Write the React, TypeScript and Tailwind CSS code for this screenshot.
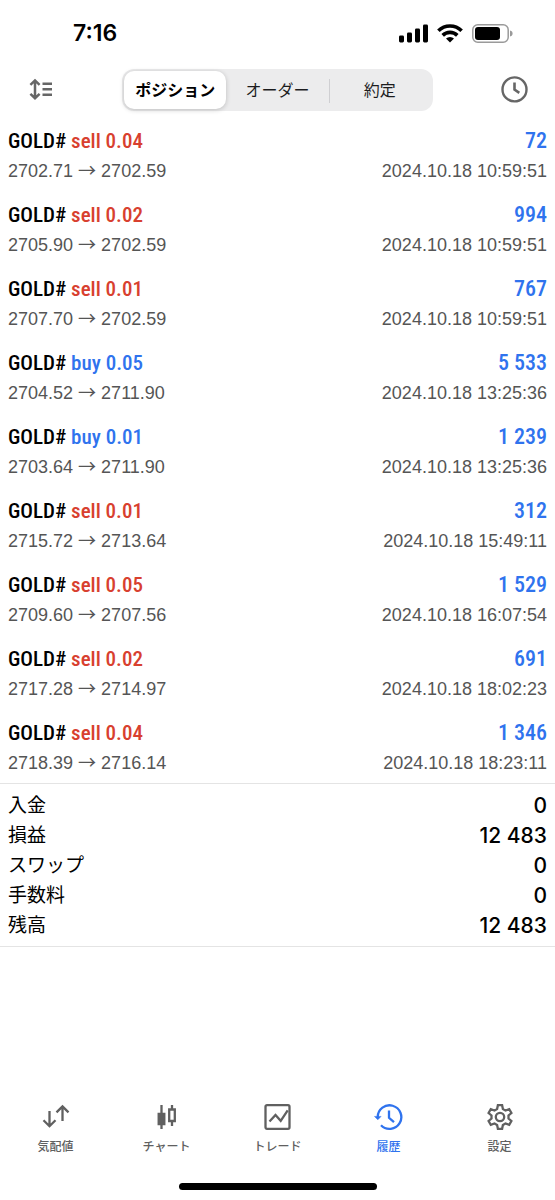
import { useState } from "react";
import type { ReactNode } from "react";
import clsx from "clsx";

type Deal = {
  side: "sell" | "buy";
  volume: string;
  open: string;
  close: string;
  profit: string;
  time: string;
};

const deals: Deal[] = [
  { side: "sell", volume: "0.04", open: "2702.71", close: "2702.59", profit: "72", time: "2024.10.18 10:59:51" },
  { side: "sell", volume: "0.02", open: "2705.90", close: "2702.59", profit: "994", time: "2024.10.18 10:59:51" },
  { side: "sell", volume: "0.01", open: "2707.70", close: "2702.59", profit: "767", time: "2024.10.18 10:59:51" },
  { side: "buy", volume: "0.05", open: "2704.52", close: "2711.90", profit: "5 533", time: "2024.10.18 13:25:36" },
  { side: "buy", volume: "0.01", open: "2703.64", close: "2711.90", profit: "1 239", time: "2024.10.18 13:25:36" },
  { side: "sell", volume: "0.01", open: "2715.72", close: "2713.64", profit: "312", time: "2024.10.18 15:49:11" },
  { side: "sell", volume: "0.05", open: "2709.60", close: "2707.56", profit: "1 529", time: "2024.10.18 16:07:54" },
  { side: "sell", volume: "0.02", open: "2717.28", close: "2714.97", profit: "691", time: "2024.10.18 18:02:23" },
  { side: "sell", volume: "0.04", open: "2718.39", close: "2716.14", profit: "1 346", time: "2024.10.18 18:23:11" },
];

const totals = [
  ["入金", "0"],
  ["損益", "12 483"],
  ["スワップ", "0"],
  ["手数料", "0"],
  ["残高", "12 483"],
];

const segments = ["ポジション", "オーダー", "約定"];

function StatusBar() {
  return (
    <div className="flex h-[66px] items-center justify-between pr-[42px] pl-[73px]">
      <span className="font-['Inter',sans-serif] text-[23px] font-semibold">7:16</span>
      <div className="flex items-center gap-[9px]">
        <svg width="29" height="19" viewBox="0 0 29 19" fill="currentColor" aria-hidden="true">
          <rect x="0" y="11.5" width="5" height="7" rx="1.4" />
          <rect x="8" y="8.5" width="5" height="10" rx="1.4" />
          <rect x="16" y="4.5" width="5" height="14" rx="1.4" />
          <rect x="24" y="0.5" width="5" height="18" rx="1.4" />
        </svg>
        <svg width="26" height="19" viewBox="0 0 26 19" aria-hidden="true">
          <g fill="none" stroke="currentColor" strokeWidth="3.6">
            <path d="M1.4 6.8a16.4 16.4 0 0 1 23.2 0" />
            <path d="M5.7 11.4a10.4 10.4 0 0 1 14.6 0" />
          </g>
          <path d="M13 18.6l-4-4.1a5.8 5.8 0 0 1 8 0z" fill="currentColor" />
        </svg>
        <svg width="41" height="19" viewBox="0 0 41 19" aria-hidden="true">
          <rect x="0.8" y="0.8" width="35.4" height="17.4" rx="5" fill="none" stroke="#9a9a9a" strokeWidth="1.5" />
          <rect x="3" y="3" width="25" height="13" rx="3" fill="currentColor" />
          <path d="M38 6.5c1.8.4 2.6 1.5 2.6 3s-.8 2.6-2.6 3z" fill="#9a9a9a" />
        </svg>
      </div>
    </div>
  );
}

function Toolbar() {
  const [active, setActive] = useState(0);

  return (
    <header className="flex h-12 items-center justify-between px-[27px]">
      <button type="button" aria-label="並べ替え" className="text-[#666]">
        <svg width="28" height="28" viewBox="0 0 28 28" fill="none" stroke="currentColor" strokeWidth="2.5">
          <path d="M8 5v17M3.4 8.8L8 4.4l4.6 4.4M3.4 17.8L8 22.2l4.6-4.4" />
          <path d="M15.5 7.8H25M15.5 13.3H25M15.5 18.8H25" />
        </svg>
      </button>
      <div role="tablist" className="flex w-[62%] max-w-md rounded-xl bg-[#ececed] p-0.5">
        {segments.map((label, i) => (
          <button
            key={label}
            type="button"
            role="tab"
            aria-selected={i === active}
            onClick={() => setActive(i)}
            className={clsx(
              "relative h-[38px] flex-1 rounded-[10px] pt-0.5 text-[16px] whitespace-nowrap",
              i === active ? "bg-white font-bold shadow-[0_1px_5px_rgba(0,0,0,0.2)]" : "text-[#1c1c1e]",
            )}
          >
            {i > 0 && i !== active && i - 1 !== active && (
              <span className="absolute top-2 left-0 h-6 w-px bg-[#cfcfd2]" />
            )}
            {label}
          </button>
        ))}
      </div>
      <button type="button" aria-label="期間" className="text-[#666]">
        <svg width="28" height="28" viewBox="0 0 28 28" fill="none" stroke="currentColor" strokeWidth="2.4">
          <circle cx="14.5" cy="13.4" r="12" />
          <path d="M14.5 6.4v7.2l4.8 3.2" strokeWidth="2.6" />
        </svg>
      </button>
    </header>
  );
}

function DealRow({ deal }: { deal: Deal }) {
  return (
    <li className="px-2 pt-2.5 pb-2">
      <div className="flex justify-between font-['Roboto_Condensed','Liberation_Sans_Narrow',sans-serif] text-[22px] leading-7 font-medium">
        <span className="text-[21px]">
          GOLD#{" "}
          <span className={deal.side === "sell" ? "text-[#d8402f]" : "text-[#2f73ee]"}>
            {deal.side} {deal.volume}
          </span>
        </span>
        <span className="text-[#2f73ee]">{deal.profit}</span>
      </div>
      <div className="mt-1 flex justify-between text-[18px] leading-6 text-[#555]">
        <span>
          {deal.open} <span className="font-['Noto_Sans_CJK_JP',sans-serif] leading-none">→</span> {deal.close}
        </span>
        <time>{deal.time}</time>
      </div>
    </li>
  );
}

function Totals() {
  return (
    <dl className="border-y border-[#e4e4e4] px-2 pt-[7px] pb-[5px]">
      {totals.map(([label, value]) => (
        <div key={label} className="flex justify-between leading-[30px]">
          <dt className="text-[19px]">{label}</dt>
          <dd className="font-['Inter',sans-serif] text-[21px] font-medium">{value}</dd>
        </div>
      ))}
    </dl>
  );
}

const tabs: { label: string; icon: ReactNode }[] = [
  {
    label: "気配値",
    icon: <path d="M8.5 8v15M2.500 17.200l6 6 6-6M21.500 18V3.500M15.500 9.400l6-6 6 6" />,
  },
  {
    label: "チャート",
    icon: (
      <>
        <path d="M9.500 2v24M20 2v4.500M20 18v5" />
        <path d="M6.700 11h5.600v10H6.700z" fill="currentColor" />
        <path d="M17.200 6.500h5.600V18h-5.600z" />
      </>
    ),
  },
  {
    label: "トレード",
    icon: (
      <>
        <rect x="2.500" y="2.200" width="24" height="23.600" rx="1.500" />
        <path d="M6.500 18.500l6-6.500 5.200 5.800 7-10.500" />
      </>
    ),
  },
  {
    label: "履歴",
    icon: (
      <>
        <path d="M3.700 14A11.800 11.800 0 1 1 7 22.300" />
        <path d="M0.500 13.400h6.600l-3.300 3.400z" fill="currentColor" strokeWidth="0.5" />
        <path d="M15 7.500v7.300l5 4.400" />
      </>
    ),
  },
  {
    label: "設定",
    icon: (
      <>
        <path d="M12.900 2.200h4.200l.8 3.800 2.600 1.500 3.700-1.300 2.200 3.800-2.900 2.500v3l2.900 2.500-2.200 3.800-3.700-1.300-2.600 1.500-.8 3.800h-4.200l-.8-3.800-2.600-1.500-3.700 1.300L3.600 18l2.900-2.500v-3L3.600 10l2.200-3.800 3.700 1.300L12.100 6z" />
        <circle cx="15" cy="14" r="4.200" />
      </>
    ),
  },
];

function TabBar() {
  const [active, setActive] = useState("履歴");

  return (
    <nav className="mt-auto grid grid-cols-5">
      {tabs.map((tab) => (
        <button
          key={tab.label}
          type="button"
          onClick={() => setActive(tab.label)}
          className={clsx(
            "flex flex-col items-center gap-2 text-[12px] leading-4 font-medium",
            tab.label === active ? "text-[#2f73ee]" : "text-[#606060]",
          )}
        >
          <svg width="30" height="28" viewBox="0 0 30 28" fill="none" stroke="currentColor" strokeWidth="2.3" aria-hidden="true">
            {tab.icon}
          </svg>
          {tab.label}
        </button>
      ))}
    </nav>
  );
}

export default function App() {
  return (
    <div className="flex min-h-screen flex-col bg-white font-['Liberation_Sans','Noto_Sans_CJK_JP',sans-serif] text-black">
      <StatusBar />
      <Toolbar />
      <main className="pt-[3px]">
        <ul>
          {deals.map((deal) => (
            <DealRow key={deal.open} deal={deal} />
          ))}
        </ul>
        <Totals />
      </main>
      <TabBar />
      <div className="mx-auto mt-7 mb-[10px] h-[7px] w-[198px] rounded-full bg-black" />
    </div>
  );
}
